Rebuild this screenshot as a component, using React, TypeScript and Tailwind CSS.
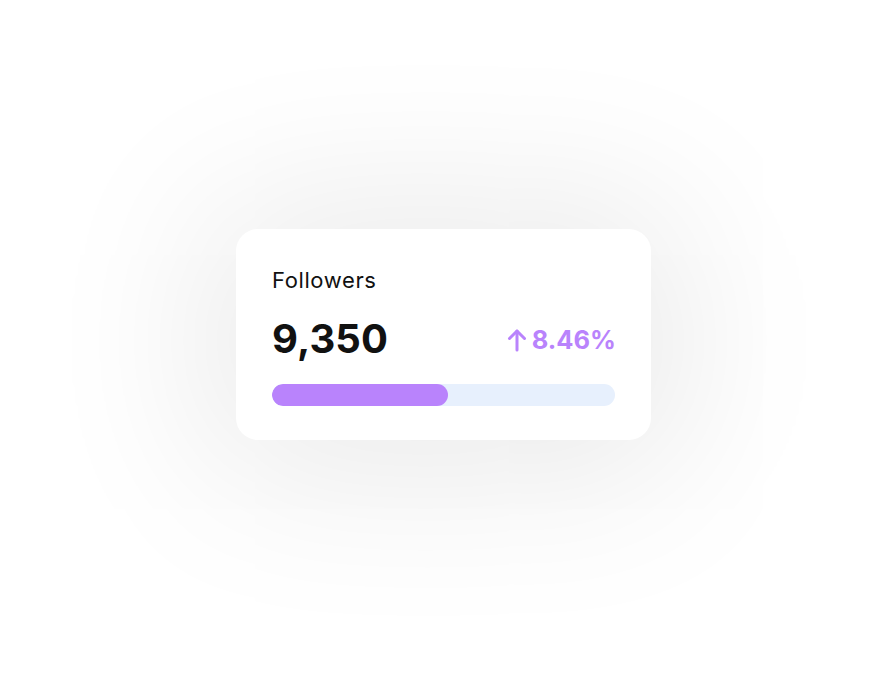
import React from "react";

export default function App() {
  return (
    <div
      className="min-h-screen w-full bg-white flex justify-center pt-[229px]"
      style={{ fontFamily: "Inter, 'Noto Sans', sans-serif" }}
    >
      <div className="w-[415px] h-[211px] rounded-[22px] bg-white shadow-[0_6px_170px_30px_rgba(0,0,0,0.09)] px-[36px] pt-[36px] flex flex-col">
        <div className="text-[22px] leading-[30px] text-[#111] tracking-[0.6px]">Followers</div>
        <div className="mt-[20px] flex items-center justify-between">
          <div className="text-[40px] leading-[48px] font-bold text-[#111] tracking-[0.1px]">9,350</div>
          <div className="flex items-center text-[#b983fc] mt-[2px] mr-[-1px]">
            <svg width="20" height="24" viewBox="0 0 20 24" fill="none" stroke="currentColor" strokeWidth="3" strokeLinecap="round" strokeLinejoin="round">
              <path d="M10 22V3" />
              <path d="M2.5 10.5L10 3l7.5 7.5" />
            </svg>
            <span className="ml-[5px] text-[25.5px] leading-[32px] font-bold">8.46%</span>
          </div>
        </div>
        <div className="mt-[21px] h-[22px] w-full rounded-full bg-[#e7f0fd] overflow-hidden">
          <div className="h-full w-[176px] rounded-full bg-[#b983fc]" />
        </div>
      </div>
    </div>
  );
}
